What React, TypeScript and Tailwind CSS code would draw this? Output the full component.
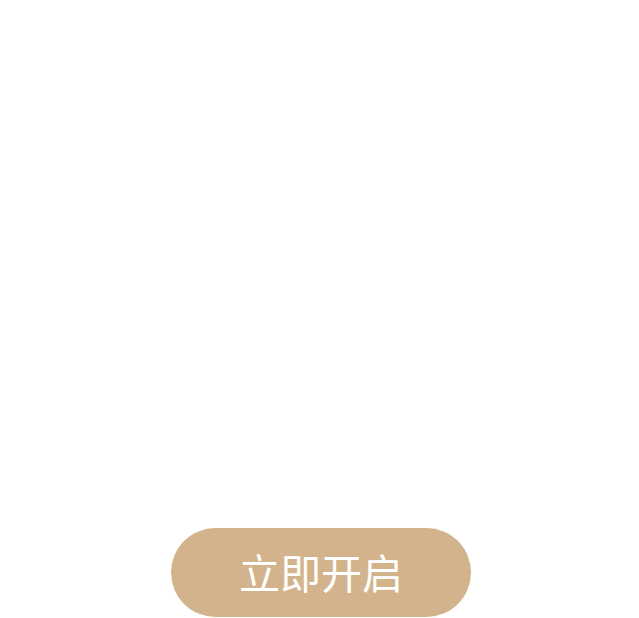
export default function App() {
  return (
    <div className="flex h-[618px] w-full flex-col items-center justify-end bg-white pb-px">
      <button className="ml-[3px] flex h-[89px] w-[300px] items-center justify-center rounded-full bg-[#d3b38b] pb-[2px] text-[41px] leading-none text-white [font-family:'Noto_Sans_CJK_SC',sans-serif]">
        立即开启
      </button>
    </div>
  );
}
